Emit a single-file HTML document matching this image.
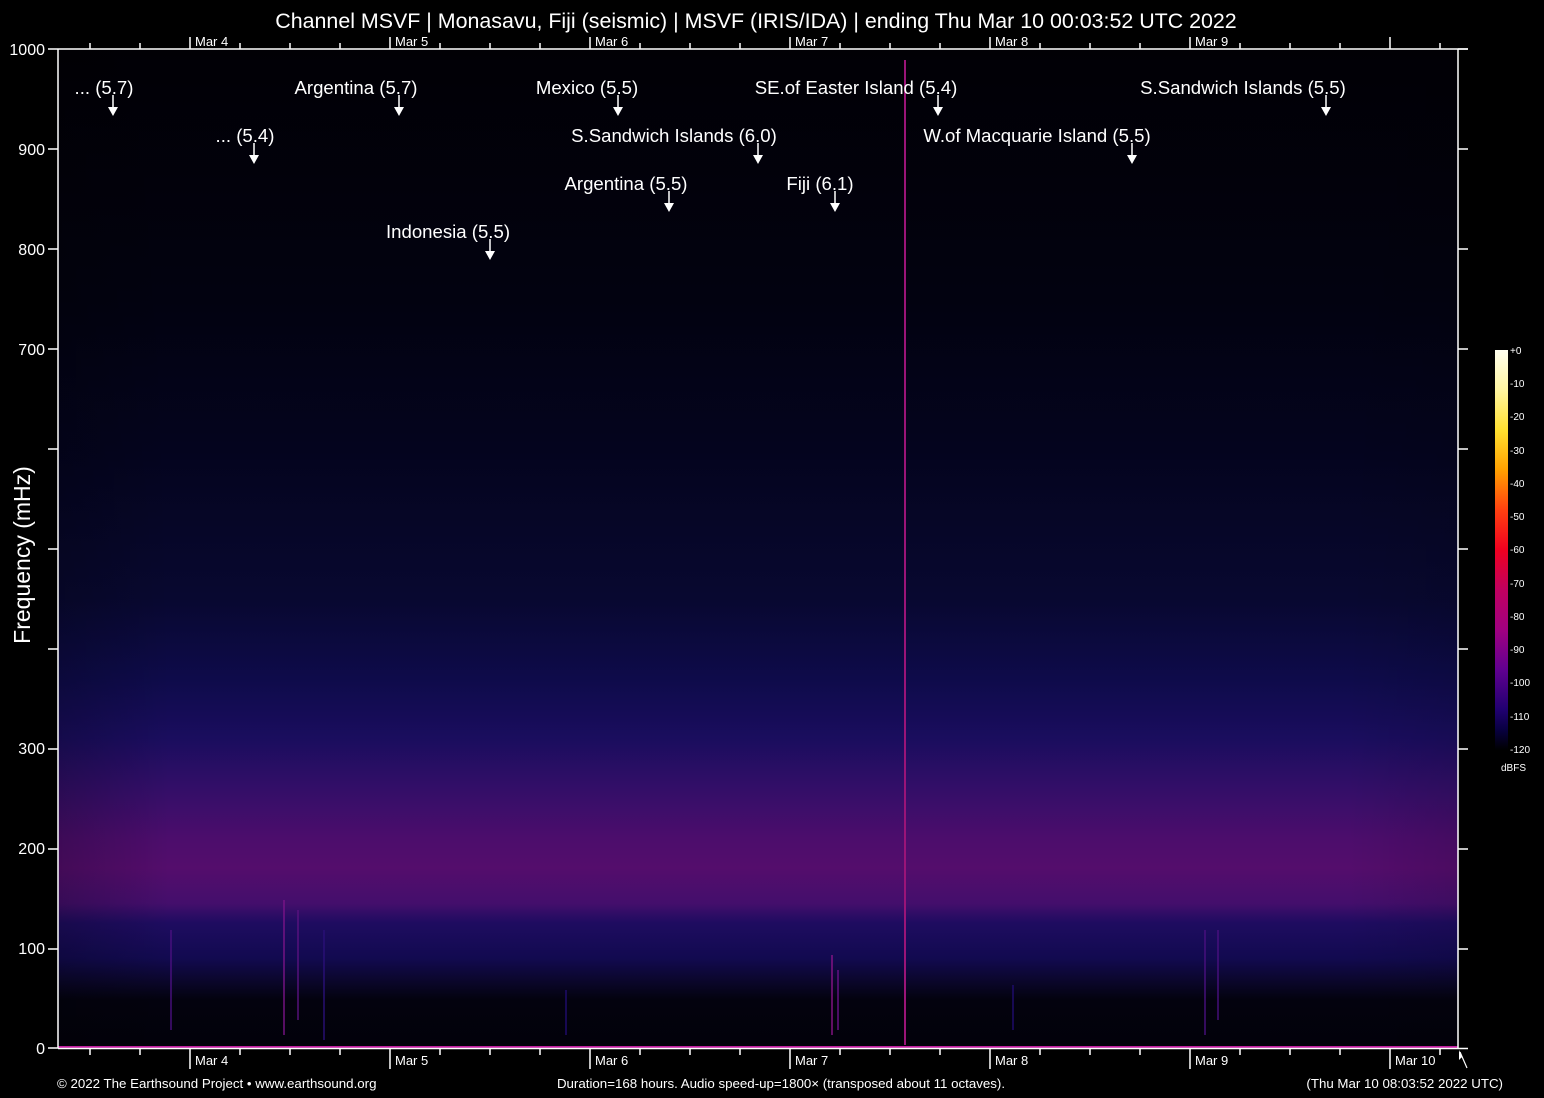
<!DOCTYPE html>
<html><head><meta charset="utf-8">
<style>
html,body{margin:0;padding:0;background:#000;}
svg{display:block;}
text{font-family:"Liberation Sans",Arial,sans-serif;fill:#fff;}
</style></head>
<body>
<svg width="1544" height="1098" viewBox="0 0 1544 1098" xmlns="http://www.w3.org/2000/svg">
<defs>
<linearGradient id="vg" x1="0" y1="49" x2="0" y2="1048" gradientUnits="userSpaceOnUse">
<stop offset="0" stop-color="#010005"/>
<stop offset="0.25" stop-color="#020210"/>
<stop offset="0.40" stop-color="#04041e"/>
<stop offset="0.55" stop-color="#080830"/>
<stop offset="0.63" stop-color="#0e0b4a"/>
<stop offset="0.69" stop-color="#1a0d5e"/>
<stop offset="0.74" stop-color="#330e68"/>
<stop offset="0.79" stop-color="#4c0d6c"/>
<stop offset="0.82" stop-color="#540d6c"/>
<stop offset="0.855" stop-color="#440e6c"/>
<stop offset="0.875" stop-color="#1e0c60"/>
<stop offset="0.91" stop-color="#120a50"/>
<stop offset="0.935" stop-color="#0a0628"/>
<stop offset="0.952" stop-color="#03020e"/>
<stop offset="1" stop-color="#02010a"/>
</linearGradient>
<linearGradient id="cb" x1="0" y1="350" x2="0" y2="750" gradientUnits="userSpaceOnUse">
<stop offset="0" stop-color="#fffff0"/>
<stop offset="0.1" stop-color="#fff5a0"/>
<stop offset="0.2" stop-color="#ffe030"/>
<stop offset="0.3" stop-color="#ffa000"/>
<stop offset="0.4" stop-color="#ff4010"/>
<stop offset="0.5" stop-color="#f00020"/>
<stop offset="0.6" stop-color="#c00060"/>
<stop offset="0.7" stop-color="#a00080"/>
<stop offset="0.8" stop-color="#600090"/>
<stop offset="0.9" stop-color="#200070"/>
<stop offset="0.95" stop-color="#080040"/>
<stop offset="1" stop-color="#000000"/>
</linearGradient>
<linearGradient id="hz" x1="58" y1="0" x2="1458" y2="0" gradientUnits="userSpaceOnUse">
<stop offset="0" stop-color="#000" stop-opacity="0.2"/>
<stop offset="0.08" stop-color="#000" stop-opacity="0"/>
<stop offset="0.92" stop-color="#000" stop-opacity="0"/>
<stop offset="1" stop-color="#000" stop-opacity="0.1"/>
</linearGradient>
</defs>

<rect x="58" y="49" width="1400" height="999" fill="url(#vg)"/>
<rect x="58" y="49" width="1400" height="999" fill="url(#hz)"/>

<g stroke-width="2" opacity="0.7">
<line x1="284" y1="900" x2="284" y2="1035" stroke="#7a1488"/>
<line x1="298" y1="910" x2="298" y2="1020" stroke="#5a1280"/>
<line x1="171" y1="930" x2="171" y2="1030" stroke="#4a1080"/>
<line x1="324" y1="930" x2="324" y2="1040" stroke="#2a1078"/>
<line x1="832" y1="955" x2="832" y2="1035" stroke="#8a1488"/>
<line x1="838" y1="970" x2="838" y2="1030" stroke="#6a1288"/>
<line x1="1205" y1="930" x2="1205" y2="1035" stroke="#4a1080"/>
<line x1="1218" y1="930" x2="1218" y2="1020" stroke="#4a1080"/>
<line x1="1013" y1="985" x2="1013" y2="1030" stroke="#200c70"/>
<line x1="566" y1="990" x2="566" y2="1035" stroke="#200c70"/>
</g>
<line x1="905" y1="60" x2="905" y2="1045" stroke="#9a1478" stroke-width="2"/>
<line x1="58" y1="1047" x2="1458" y2="1047" stroke="#c020a0" stroke-width="2"/>

<g stroke="#fff" stroke-width="1.5" fill="none">
<line x1="58" y1="49" x2="1468" y2="49"/>
<line x1="58" y1="49" x2="58" y2="1048"/>
<line x1="1458" y1="49" x2="1458" y2="1048"/>
<line x1="58" y1="1048.5" x2="1468" y2="1048.5"/>
<path d="M48 49H58M48 149H58M48 249H58M48 349H58M48 449H58M48 549H58M48 649H58M48 749H58M48 849H58M48 949H58M48 1048H58"/>
<path d="M1458 49H1468M1458 149H1468M1458 249H1468M1458 349H1468M1458 449H1468M1458 549H1468M1458 649H1468M1458 749H1468M1458 849H1468M1458 949H1468"/>
<path d="M90 49V43M140 49V43M240 49V43M290 49V43M340 49V43M440 49V43M490 49V43M540 49V43M640 49V43M690 49V43M740 49V43M840 49V43M890 49V43M940 49V43M1040 49V43M1090 49V43M1140 49V43M1240 49V43M1290 49V43M1340 49V43M1440 49V43"/>
<path d="M190 49V37M390 49V37M590 49V37M790 49V37M990 49V37M1190 49V37M1390 49V37"/>
<path d="M90 1048V1055M140 1048V1055M240 1048V1055M290 1048V1055M340 1048V1055M440 1048V1055M490 1048V1055M540 1048V1055M640 1048V1055M690 1048V1055M740 1048V1055M840 1048V1055M890 1048V1055M940 1048V1055M1040 1048V1055M1090 1048V1055M1140 1048V1055M1240 1048V1055M1290 1048V1055M1340 1048V1055M1440 1048V1055"/>
<path d="M190 1048V1069M390 1048V1069M590 1048V1069M790 1048V1069M990 1048V1069M1190 1048V1069M1390 1048V1069"/>
<path d="M1460 1052L1467 1068" stroke-width="1.2"/>
</g>
<path d="M1459 1050l0 10l3-3z" fill="#fff"/>

<g font-size="16" text-anchor="end">
<text x="45" y="55">1000</text>
<text x="45" y="155">900</text>
<text x="45" y="255">800</text>
<text x="45" y="355">700</text>
<text x="45" y="754">300</text>
<text x="45" y="854">200</text>
<text x="45" y="954">100</text>
<text x="45" y="1054">0</text>
</g>
<text x="30" y="555" font-size="23" text-anchor="middle" transform="rotate(-90 30 555)">Frequency (mHz)</text>

<g font-size="13">
<text x="195" y="46">Mar  4</text><text x="395" y="46">Mar  5</text><text x="595" y="46">Mar  6</text>
<text x="795" y="46">Mar  7</text><text x="995" y="46">Mar  8</text><text x="1195" y="46">Mar  9</text>
<text x="195" y="1065">Mar  4</text><text x="395" y="1065">Mar  5</text><text x="595" y="1065">Mar  6</text>
<text x="795" y="1065">Mar  7</text><text x="995" y="1065">Mar  8</text><text x="1195" y="1065">Mar  9</text>
<text x="1395" y="1065">Mar 10</text>
</g>

<text x="756" y="28" font-size="21.4" text-anchor="middle">Channel MSVF | Monasavu, Fiji (seismic) | MSVF (IRIS/IDA) | ending Thu Mar 10 00:03:52 UTC 2022</text>

<g font-size="18.6" text-anchor="middle">
<text x="104" y="94">... (5.7)</text>
<text x="245" y="142">... (5.4)</text>
<text x="356" y="94">Argentina (5.7)</text>
<text x="448" y="238">Indonesia (5.5)</text>
<text x="587" y="94">Mexico (5.5)</text>
<text x="674" y="142">S.Sandwich Islands (6.0)</text>
<text x="626" y="190">Argentina (5.5)</text>
<text x="856" y="94">SE.of Easter Island (5.4)</text>
<text x="820" y="190">Fiji (6.1)</text>
<text x="1037" y="142">W.of Macquarie Island (5.5)</text>
<text x="1243" y="94">S.Sandwich Islands (5.5)</text>
</g>
<g stroke="#fff" stroke-width="1.5">
<path d="M113 95V108M254 143V156M399 95V108M490 239V252M618 95V108M758 143V156M669 191V204M938 95V108M835 191V204M1132 143V156M1326 95V108"/>
</g>
<g fill="#fff">
<path d="M108 107h10l-5 9z"/><path d="M249 155h10l-5 9z"/><path d="M394 107h10l-5 9z"/>
<path d="M485 251h10l-5 9z"/><path d="M613 107h10l-5 9z"/><path d="M753 155h10l-5 9z"/>
<path d="M664 203h10l-5 9z"/><path d="M933 107h10l-5 9z"/><path d="M830 203h10l-5 9z"/>
<path d="M1127 155h10l-5 9z"/><path d="M1321 107h10l-5 9z"/>
</g>

<rect x="1495" y="350" width="13" height="400" fill="url(#cb)"/>
<g font-size="10" fill="#ddd">
<text x="1510" y="354">+0</text><text x="1510" y="387">-10</text><text x="1510" y="420">-20</text>
<text x="1510" y="454">-30</text><text x="1510" y="487">-40</text><text x="1510" y="520">-50</text>
<text x="1510" y="553">-60</text><text x="1510" y="587">-70</text><text x="1510" y="620">-80</text>
<text x="1510" y="653">-90</text><text x="1510" y="686">-100</text><text x="1510" y="720">-110</text>
<text x="1510" y="753">-120</text><text x="1501" y="771">dBFS</text>
</g>

<g font-size="13.3">
<text x="57" y="1088">© 2022 The Earthsound Project • www.earthsound.org</text>
<text x="781" y="1088" text-anchor="middle">Duration=168 hours. Audio speed-up=1800× (transposed about 11 octaves).</text>
<text x="1503" y="1088" text-anchor="end">(Thu Mar 10 08:03:52 2022 UTC)</text>
</g>
</svg>
</body></html>
